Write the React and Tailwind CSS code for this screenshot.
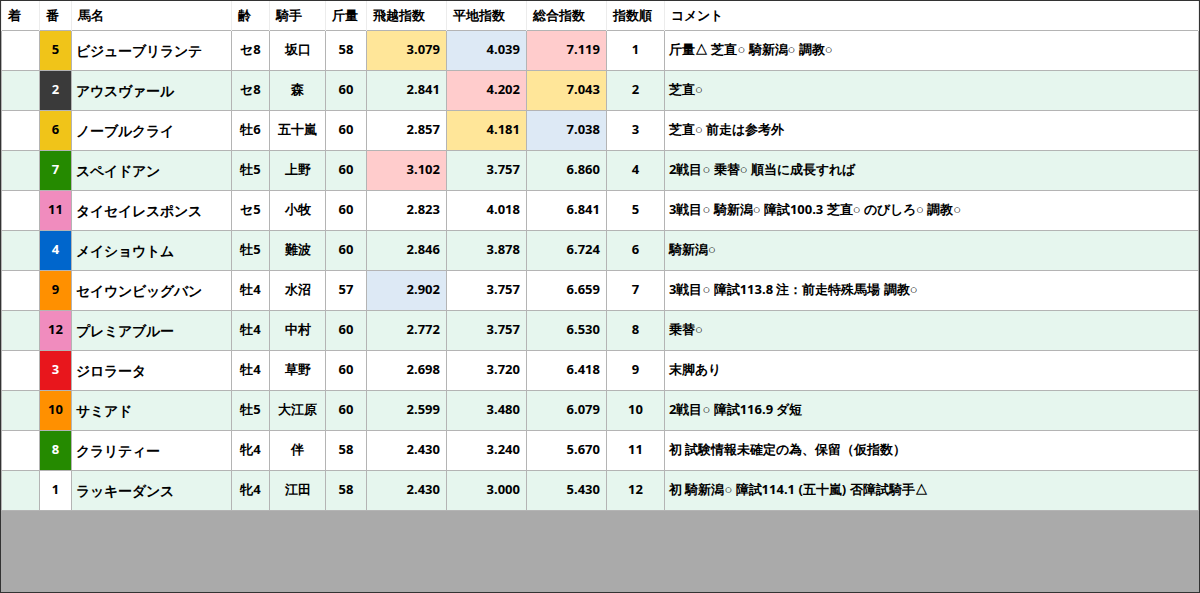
const rows = [
  ["5","ビジューブリランテ","セ8","坂口","58","3.079","4.039","7.119","1","斤量△ 芝直○ 騎新潟○ 調教○",["y","b","p"]],
  ["2","アウスヴァール","セ8","森","60","2.841","4.202","7.043","2","芝直○",["","p","y"]],
  ["6","ノーブルクライ","牡6","五十嵐","60","2.857","4.181","7.038","3","芝直○ 前走は参考外",["","y","b"]],
  ["7","スペイドアン","牡5","上野","60","3.102","3.757","6.860","4","2戦目○ 乗替○ 順当に成長すれば",["p","",""]],
  ["11","タイセイレスポンス","セ5","小牧","60","2.823","4.018","6.841","5","3戦目○ 騎新潟○ 障試100.3 芝直○ のびしろ○ 調教○",["","",""]],
  ["4","メイショウトム","牡5","難波","60","2.846","3.878","6.724","6","騎新潟○",["","",""]],
  ["9","セイウンビッグバン","牡4","水沼","57","2.902","3.757","6.659","7","3戦目○ 障試113.8 注：前走特殊馬場 調教○",["b","",""]],
  ["12","プレミアブルー","牡4","中村","60","2.772","3.757","6.530","8","乗替○",["","",""]],
  ["3","ジロラータ","牡4","草野","60","2.698","3.720","6.418","9","末脚あり",["","",""]],
  ["10","サミアド","牡5","大江原","60","2.599","3.480","6.079","10","2戦目○ 障試116.9 ダ短",["","",""]],
  ["8","クラリティー","牝4","伴","58","2.430","3.240","5.670","11","初 試験情報未確定の為、保留（仮指数）",["","",""]],
  ["1","ラッキーダンス","牝4","江田","58","2.430","3.000","5.430","12","初 騎新潟○ 障試114.1 (五十嵐) 否障試騎手△",["","",""]],
];
const gate = {
  "1":"bg-white text-black","2":"bg-[#3a3a3a] text-white","3":"bg-[#e8161c] text-white","4":"bg-[#0066cc] text-white",
  "5":"bg-[#f0c419] text-black","6":"bg-[#f0c419] text-black","7":"bg-[#258a00] text-white","8":"bg-[#258a00] text-white",
  "9":"bg-[#ff9000] text-black","10":"bg-[#ff9000] text-black","11":"bg-[#f08cbe] text-black","12":"bg-[#f08cbe] text-black",
};
const hl = { y: "bg-[#ffe699]", b: "bg-[#dde9f5]", p: "bg-[#ffcccc]", "": "" };
const td = "border border-[#b4b4b4] h-[40px] p-0";
const heads = [
  ["着","w-[38px]"],["番","w-[32px] text-center"],["馬名","w-[160px]"],["齢","w-[38px]"],["騎手","w-[56px]"],["斤量","w-[41px]"],
  ["飛越指数","w-[80px]"],["平地指数","w-[80px]"],["総合指数","w-[80px]"],["指数順","w-[58px]"],["コメント",""],
];
export default function App() {
  return (
    <div className="w-[1200px] h-[593px] bg-[#aaaaaa] border border-[#333] box-border overflow-hidden [font-family:'DejaVu_Sans','Noto_Sans_CJK_JP',sans-serif]">
      <table className="w-[1198px] table-fixed border-collapse bg-white text-[13px] font-bold text-black">
        <thead>
          <tr className="h-[29px]">
            {heads.map(([h,c],i)=>(
              <th key={i} className={`border-x border-[#ececec] font-bold text-left px-[6px] whitespace-nowrap [font-family:'Noto_Sans_CJK_JP',sans-serif] ${c}`}>{h}</th>
            ))}
          </tr>
        </thead>
        <tbody>
          {rows.map((r,i)=>(
            <tr key={i} className={i%2 ? "bg-[#e6f6ee]" : "bg-white"}>
              <td className={td}></td>
              <td className={`${td} text-center ${gate[r[0]]}`}>{r[0]}</td>
              <td className={`${td} px-[4px] text-[14px] [font-family:'Noto_Sans_CJK_JP',sans-serif]`}>{r[1]}</td>
              <td className={`${td} text-center`}>{r[2]}</td>
              <td className={`${td} text-center [font-family:'Noto_Sans_CJK_JP',sans-serif]`}>{r[3]}</td>
              <td className={`${td} text-center`}>{r[4]}</td>
              <td className={`${td} text-right pr-[6px] ${hl[r[10][0]]}`}>{r[5]}</td>
              <td className={`${td} text-right pr-[6px] ${hl[r[10][1]]}`}>{r[6]}</td>
              <td className={`${td} text-right pr-[6px] ${hl[r[10][2]]}`}>{r[7]}</td>
              <td className={`${td} text-center`}>{r[8]}</td>
              <td className={`${td} px-[4px] text-[13px] [font-family:'Noto_Sans_CJK_JP',sans-serif]`}>{r[9]}</td>
            </tr>
          ))}
        </tbody>
      </table>
    </div>
  );
}
